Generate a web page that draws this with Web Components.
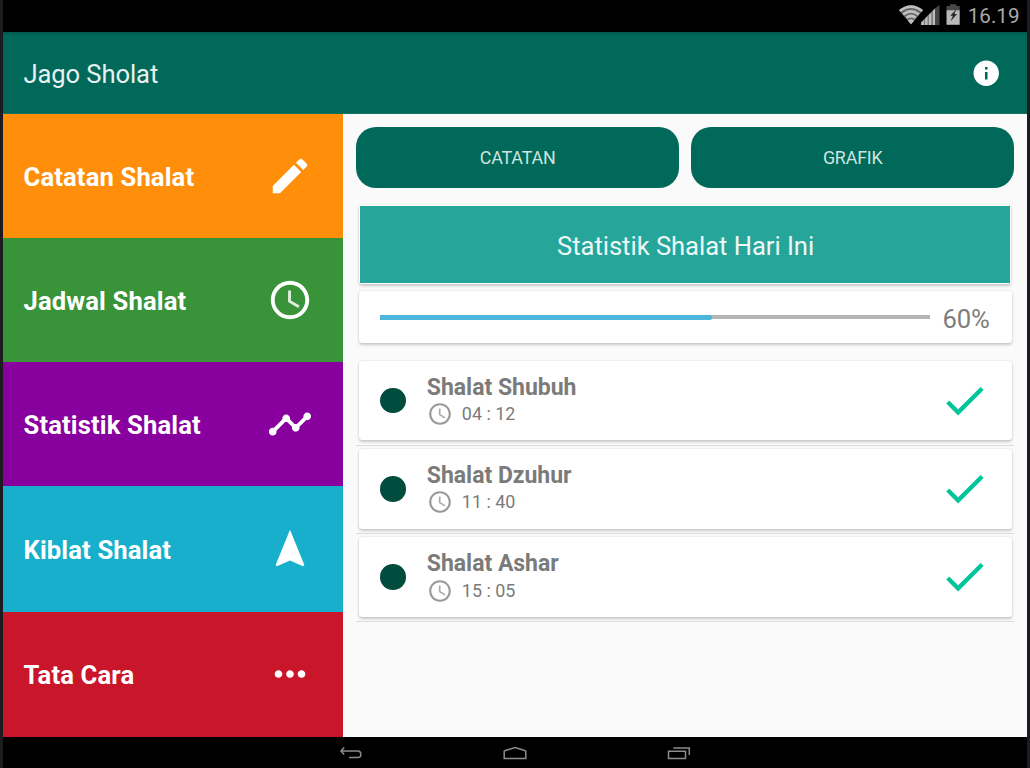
<!DOCTYPE html>
<html lang="id"><head><meta charset="utf-8"><title>Jago Sholat</title>
<style>html,body{margin:0;height:100%;overflow:hidden;background:#1c1b20;font-family:Roboto,"Liberation Sans",sans-serif}</style></head>
<body><jago-app></jago-app>
<script>
const define=(name,html)=>{
  const t=document.createElement('template');t.innerHTML=html;
  customElements.define(name,class extends HTMLElement{
    constructor(){super();this.attachShadow({mode:'open'}).append(t.content.cloneNode(true));}
  });
};
const icons={
  edit:'<path d="M3 17.25V21h3.75L17.81 9.94l-3.75-3.75L3 17.25zM20.71 7.04a1 1 0 0 0 0-1.41l-2.34-2.34a1 1 0 0 0-1.41 0l-1.83 1.83 3.75 3.75 1.83-1.83z"/>',
  clock:'<path d="M11.99 2C6.47 2 2 6.48 2 12s4.47 10 9.99 10C17.52 22 22 17.52 22 12S17.52 2 11.99 2zM12 20c-4.42 0-8-3.58-8-8s3.58-8 8-8 8 3.58 8 8-3.58 8-8 8z"/><path fill-opacity=".85" d="M12.5 7H11v6l5.25 3.15.75-1.23-4.5-2.67z"/>',
  timeline:'<path d="M23 8c0 1.1-.9 2-2 2-.18 0-.35-.02-.51-.07l-3.56 3.55c.05.16.07.34.07.52 0 1.1-.9 2-2 2s-2-.9-2-2c0-.18.02-.36.07-.52l-2.55-2.55c-.16.05-.34.07-.52.07s-.36-.02-.52-.07l-4.55 4.56c.05.16.07.33.07.51 0 1.1-.9 2-2 2s-2-.9-2-2 .9-2 2-2c.18 0 .35.02.51.07l4.56-4.55C8.02 9.36 8 9.18 8 9c0-1.1.9-2 2-2s2 .9 2 2c0 .18-.02.36-.07.52l2.55 2.55c.16-.05.34-.07.52-.07s.36.02.52.07l3.55-3.56C19.02 8.35 19 8.18 19 8c0-1.1.9-2 2-2s2 .9 2 2z"/>',
  arrow:'<path d="M12 2L4.5 20.29l.71.71L12 18l6.79 3 .71-.71z"/>',
  more:'<path d="M6 10c-1.1 0-2 .9-2 2s.9 2 2 2 2-.9 2-2-.9-2-2-2zm12 0c-1.1 0-2 .9-2 2s.9 2 2 2 2-.9 2-2-.9-2-2-2zm-6 0c-1.1 0-2 .9-2 2s.9 2 2 2 2-.9 2-2-.9-2-2-2z"/>',
  check:'<path d="M9 16.17L4.83 12l-1.42 1.41L9 19 21 7l-1.41-1.41z"/>',
  info:'<path d="M12 2C6.48 2 2 6.48 2 12s4.48 10 10 10 10-4.48 10-10S17.52 2 12 2zm1 15h-2v-6h2v6zm0-8h-2V7h2v2z"/>'
};
customElements.define('m-icon',class extends HTMLElement{
  constructor(){super();this.attachShadow({mode:'open'});}
  connectedCallback(){this.shadowRoot.innerHTML=`<style>:host{display:block;flex:none;width:var(--size,46px);height:var(--size,46px)}svg{display:block;width:100%;height:100%;fill:currentColor}</style><svg viewBox="0 0 24 24">${icons[this.getAttribute('name')]}</svg>`;}
});
define('status-bar',`<style>
:host{display:flex;box-sizing:border-box;height:32px;background:#000;color:#a9a9a9;justify-content:flex-end;align-items:center;padding-right:7.5px}
svg{display:block;flex:none}span{font-size:20.6px;line-height:32px;margin-left:6px}
</style>
<svg width="64" height="32" viewBox="-.5 0 64 32"><path fill="#666" d="M.5 10.2Q12.5.8 24.5 10.2L12.5 24.6z"/><g fill="none" stroke="#c0c0c0" stroke-width="2.7">
<path d="M1.3 11Q12.5 2.2 23.7 11" /><path d="M4.6 14.5Q12.5 8.2 20.4 14.5"/><path d="M7.8 17.8Q12.5 14.2 17.2 17.8"/></g><path d="M9.3 20.4Q12.5 18.2 15.7 20.4L12.5 24.3z" fill="#c0c0c0"/>
<path fill="#777" d="M22.4 25v-2.6L37 7.8V25z"/><g fill="#bdbdbd"><path d="M22.8 25v-2.2l2.6-2.8V25zM26.6 25v-6.2l2.4-2.6V25zM30.4 25v-10l2.4-2.6V25z"/><path d="M34.4 25V11l2.2-2.4V25z"/></g><path fill="#444" d="M37.3 25V7.8L41 4.8V25z"/>
<path fill="#484848" d="M51.5 4.2h6.4V6h3.3v4.6H48V6h3.5z"/><path fill="#b8b8b8" d="M48 10.2h13.2V24.8H48z"/><path fill="#222" d="M57.8 9.2l-6 6.5h2.6l-2.4 5.5 6.6-7.2h-2.8z"/></svg><span>16.19</span>`);
define('app-bar',`<style>
:host{display:flex;box-sizing:border-box;height:82px;background:#00695a;color:#e8f2f0;align-items:center;justify-content:space-between;padding:2px 26px 0 20.5px;border-bottom:1px solid #15705f;box-shadow:inset 0 2px 2px #00463c66}
h1{margin:0;font-size:25.6px;font-weight:400;letter-spacing:-.1px;padding-top:1px}m-icon{--size:30.5px;color:#fff}
</style><h1><slot></slot></h1><m-icon name="info"></m-icon>`);
define('menu-item',`<style>
:host{display:flex;align-items:center;justify-content:space-between;padding:0 30.4px 0 20.5px;color:#fff;font-size:25.6px;font-weight:700;letter-spacing:.14px}
span{padding-top:2px}
</style><span><slot></slot></span><slot name="icon"></slot>`);
define('side-menu',`<style>
:host{display:grid;grid-template-rows:124px 124px 124.4px 125.2px 1fr;width:340.4px;flex:none}
.a{background:#ff8f0b}.b{background:#399338}.c{background:#88009d}.d{background:#17afcb}.e{background:#c9162a}
</style>
<menu-item class="a">Catatan Shalat<m-icon slot="icon" name="edit"></m-icon></menu-item>
<menu-item class="b">Jadwal Shalat<m-icon slot="icon" name="clock"></m-icon></menu-item>
<menu-item class="c">Statistik Shalat<m-icon slot="icon" name="timeline"></m-icon></menu-item>
<menu-item class="d">Kiblat Shalat<m-icon slot="icon" name="arrow"></m-icon></menu-item>
<menu-item class="e">Tata Cara<m-icon slot="icon" name="more"></m-icon></menu-item>`);
define('tab-button',`<style>:host{display:flex;align-items:center;justify-content:center;height:61.5px;border-radius:20px;background:#00695a;color:#cfe3df;font-size:17.9px;letter-spacing:-.2px}</style><slot></slot>`);
define('ui-card',`<style>:host{display:flex;align-items:center;box-sizing:border-box;background:#fff;border-radius:3.5px;box-shadow:0 1.5px 3px #00000030,0 0 2px #00000014}</style><slot></slot>`);
define('progress-line',`<style>:host{display:block;flex:1;height:4px;background:#b5b5b5}div{width:60.2%;height:5px;margin-top:-.5px;background:#4db6dd;border-radius:0 2px 2px 0}</style><div></div>`);
define('prayer-row',`<style>
:host{display:block;height:84.3px;padding:0 2px 0 2.4px;border-bottom:1px solid #dcdcdc;margin-bottom:3px}
ui-card{height:79.8px;padding:0 22px 0 21.7px}
i{width:25.6px;height:25.6px;border-radius:50%;background:#004d40;margin:.5px 20.8px 0 0}
.t{flex:1;color:#7b7b7b}.n{font-size:23px;line-height:27.5px;font-weight:700;letter-spacing:-.03px}
.h{display:flex;align-items:center;font-size:17.9px;line-height:26px;gap:9px}
.h m-icon{--size:26px;color:#999;margin:0}.c{--size:51px;color:#00c49a}
</style><ui-card><i></i><div class="t"><div class="n"><slot></slot></div><div class="h"><m-icon name="clock"></m-icon><slot name="time"></slot></div></div><m-icon class="c" name="check"></m-icon></ui-card>`);
define('stat-panel',`<style>
:host{display:block;flex:1;box-sizing:border-box;background:#fafafa;padding:12.5px 13px 0}
.tabs{display:grid;grid-template-columns:1fr 1fr;gap:12.5px}
.head{height:79px;margin:17px 2.6px 0 2.4px;padding:1px}
.head div{width:100%;height:100%;box-sizing:border-box;padding:2px 0 0 1px;background:#26a69a;color:#edf8f6;font-size:25.6px;letter-spacing:-.04px;display:flex;align-items:center;justify-content:center}
.prog{height:52px;margin:7px 2.3px 17.5px 2.4px;padding:0 22px 0 21.5px;font-size:25.6px;color:#7d7d7d}
.prog span{padding-top:3px;letter-spacing:-.1px}
progress-line{margin-right:12px}
</style>
<div class="tabs"><tab-button>CATATAN</tab-button><tab-button>GRAFIK</tab-button></div>
<ui-card class="head"><div>Statistik Shalat Hari Ini</div></ui-card>
<ui-card class="prog"><progress-line></progress-line><span>60%</span></ui-card>
<prayer-row>Shalat Shubuh<span slot="time">04 : 12</span></prayer-row>
<prayer-row>Shalat Dzuhur<span slot="time">11 : 40</span></prayer-row>
<prayer-row>Shalat Ashar<span slot="time">15 : 05</span></prayer-row>`);
define('nav-bar',`<style>
:host{display:grid;grid-template-columns:repeat(3,164px);justify-content:center;justify-items:center;align-items:center;height:30.5px;background:#000}
svg{display:block;width:24px;height:14px;fill:none;stroke:#8c8c8c;stroke-width:1.5;margin:1px 0 0}
</style>
<svg viewBox="0 0 24 14"><path d="M5.2 1.5L2 5l3.2 3.4M2 5h16.5q3.3 0 3.3 3v1.2q0 2.3-3.3 2.3H10"/></svg>
<svg viewBox="0 0 24 14"><path d="M1.2 12.5V5.2L3 4.3 12 1.6l9 2.7 1.8.9v7.3z"/></svg>
<svg viewBox="0 0 24 14"><path d="M1.5 5.2h17v7.2h-17zM6.3 2h16v7"/></svg>`);
define('jago-app',`<style>
:host{display:flex;flex-direction:column;width:1024px;height:768px;margin:0 3px}
main{display:flex;height:623.4px;flex:none}
</style><status-bar></status-bar><app-bar>Jago Sholat</app-bar><main><side-menu></side-menu><stat-panel></stat-panel></main><nav-bar></nav-bar>`);
</script></body></html>
